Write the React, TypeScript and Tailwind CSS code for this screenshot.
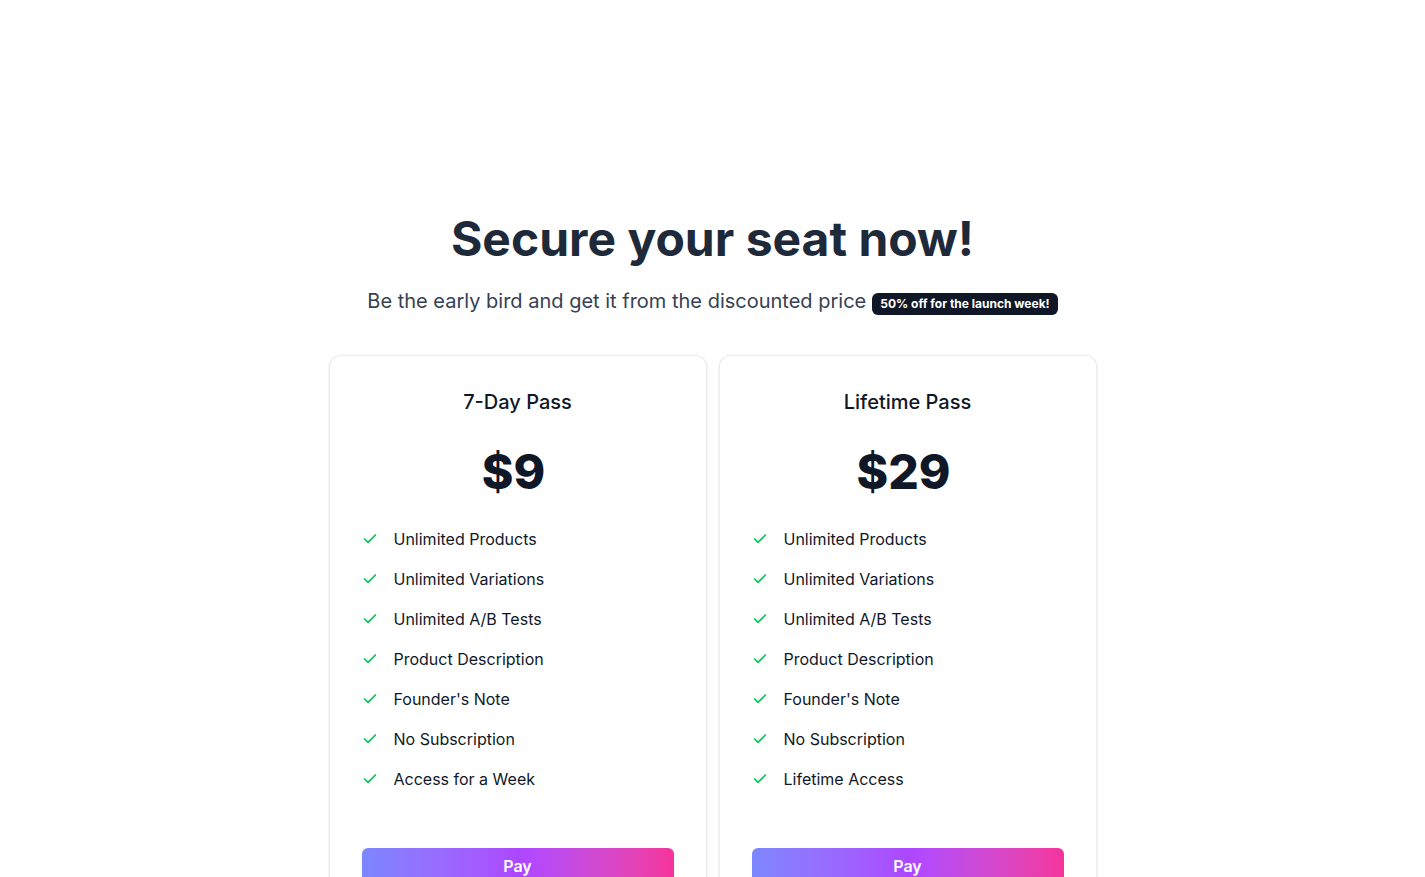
import React from "react";
import { Check } from "lucide-react";

const plans = [
  {
    name: "7-Day Pass",
    price: "$9",
    features: [
      "Unlimited Products",
      "Unlimited Variations",
      "Unlimited A/B Tests",
      "Product Description",
      "Founder's Note",
      "No Subscription",
      "Access for a Week",
    ],
  },
  {
    name: "Lifetime Pass",
    price: "$29",
    features: [
      "Unlimited Products",
      "Unlimited Variations",
      "Unlimited A/B Tests",
      "Product Description",
      "Founder's Note",
      "No Subscription",
      "Lifetime Access",
    ],
  },
];

export default function App() {
  return (
    <div
      className="min-h-screen bg-white text-gray-900"
      style={{ fontFamily: "Inter, 'Noto Sans', sans-serif" }}
    >
      <div className="pt-[215px] flex flex-col items-center">
        <h1 className="text-5xl leading-none font-bold text-gray-800">
          Secure your seat now!
        </h1>
        <div className="mt-6 flex items-center">
          <p className="text-xl leading-7 text-gray-700">
            Be the early bird and get it from the discounted price
          </p>
          <span className="ml-1.5 mt-1.5 rounded-md bg-gray-900 px-2 py-[3px] text-xs font-bold leading-4 text-white">
            50% off for the launch week!
          </span>
        </div>
        <div className="mt-10 grid w-[768px] grid-cols-2 gap-3">
          {plans.map((p) => (
            <div
              key={p.name}
              className="rounded-xl border border-gray-200/80 bg-white p-8 shadow-sm"
            >
              <h2 className="text-center text-xl leading-7 font-medium text-gray-900">
                {p.name}
              </h2>
              <div className="mt-8 pr-2 text-center text-5xl leading-none font-extrabold text-gray-900">
                {p.price}
              </div>
              <ul className="mt-[31px] flex flex-col gap-4">
                {p.features.map((f) => (
                  <li key={f} className="flex items-center gap-4 text-base leading-6 text-gray-900">
                    <Check className="h-4 w-4 text-green-500" strokeWidth={2.5} />
                    <span>{f}</span>
                  </li>
                ))}
              </ul>
              <button className="mt-[57px] w-full rounded-md bg-gradient-to-r from-indigo-400 via-purple-500 to-pink-500 py-1.5 text-base leading-6 font-semibold text-white">
                Pay
              </button>
            </div>
          ))}
        </div>
      </div>
    </div>
  );
}
